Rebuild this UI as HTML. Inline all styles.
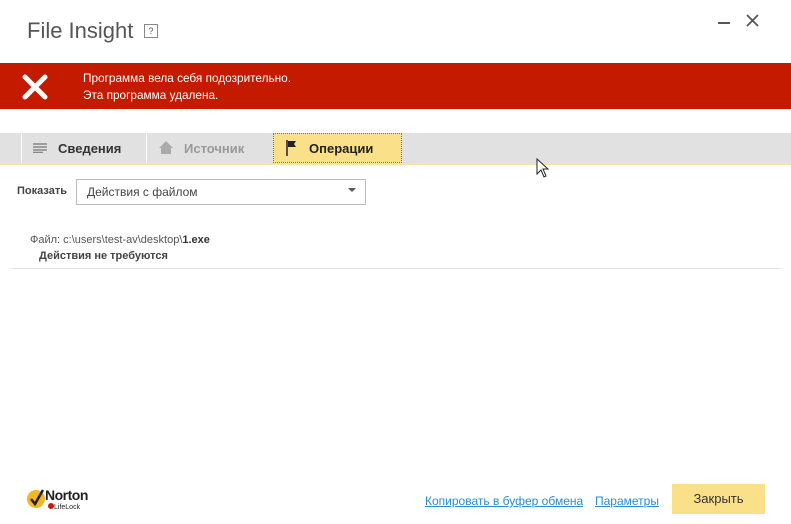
<!DOCTYPE html>
<html><head><meta charset="utf-8"><style>
body{margin:0;width:791px;height:524px;background:#fff;font-family:"Liberation Sans",sans-serif;position:relative;overflow:hidden}
.a{position:absolute}
</style></head><body>
<div class="a" style="left:27px;top:18px;font-size:22px;color:#555">File Insight</div>
<div class="a" style="left:144px;top:24px;width:12px;height:12px;border:1px solid #888;font-size:9px;color:#555;text-align:center;line-height:12px">?</div>
<div class="a" style="left:718px;top:22px;width:12px;height:2px;background:#555"></div>
<svg class="a" style="left:746px;top:14px" width="13" height="13"><path d="M1 1L12 12M12 1L1 12" stroke="#555" stroke-width="1.8"/></svg>
<div class="a" style="left:0;top:63px;width:791px;height:46px;background:#c41a00"></div>
<svg class="a" style="left:22px;top:74px" width="26" height="26"><path d="M3 3L23 23M23 3L3 23" stroke="#fff" stroke-width="5" stroke-linecap="round"/></svg>
<div class="a" style="left:83px;top:70px;font-size:11.8px;color:#fff;line-height:17px">Программа вела себя подозрительно.<br>Эта программа удалена.</div>
<div class="a" style="left:0;top:133px;width:791px;height:30px;background:#e1e1e1;border-bottom:2px solid #f6e3a6"></div>
<div class="a" style="left:21px;top:133px;width:1px;height:30px;background:#fff"></div>
<div class="a" style="left:146px;top:133px;width:1px;height:30px;background:#fff"></div>
<svg class="a" style="left:33px;top:143px" width="14" height="10"><path d="M0 1H14M0 4H14M0 7H14M0 9.5H10" stroke="#888" stroke-width="1.5"/></svg>
<div class="a" style="left:58px;top:141px;font-size:13px;font-weight:bold;color:#333">Сведения</div>
<svg class="a" style="left:158px;top:140px" width="16" height="14"><path d="M8 1L1 8H3V14H13V8H15Z" fill="#aaa"/></svg>
<div class="a" style="left:184px;top:141px;font-size:13px;font-weight:bold;color:#999">Источник</div>
<div class="a" style="left:273px;top:133px;width:127px;height:28px;background:#fbe08a;border:1px dotted #777"></div>
<svg class="a" style="left:286px;top:140px" width="12" height="16"><path d="M1 0V16" stroke="#222" stroke-width="1.5"/><path d="M2 1H10L8 4L10 7H2Z" fill="#222"/></svg>
<div class="a" style="left:309px;top:141px;font-size:13px;font-weight:bold;color:#222">Операции</div>
<svg class="a" style="left:536px;top:158px" width="14" height="20"><path d="M1 1V16L5 12L8 19L10 18L7 11H12Z" fill="#fff" stroke="#222" stroke-width="1"/></svg>
<div class="a" style="left:17px;top:185px;font-size:11px;font-weight:bold;color:#444">Показать</div>
<div class="a" style="left:76px;top:179px;width:288px;height:24px;border:1px solid #bbb"></div>
<div class="a" style="left:87px;top:185px;font-size:12px;color:#444">Действия с файлом</div>
<div class="a" style="left:348px;top:188px;width:0;height:0;border-left:4px solid transparent;border-right:4px solid transparent;border-top:4px solid #555"></div>
<div class="a" style="left:30px;top:234px;font-size:11px;color:#555">Файл: c:\users\test-av\desktop\<b style="color:#333">1.exe</b></div>
<div class="a" style="left:39px;top:250px;font-size:11px;font-weight:bold;color:#444">Действия не требуются</div>
<div class="a" style="left:11px;top:268px;width:770px;height:1px;background:#e3e3e3"></div>
<svg class="a" style="left:26px;top:487px" width="20" height="22"><circle cx="10" cy="12" r="9" fill="#f2b823"/><path d="M5 12L9 17L17 3" stroke="#222" stroke-width="2.5" fill="none"/></svg>
<div class="a" style="left:45px;top:487px;font-size:14px;font-weight:bold;color:#222;letter-spacing:-0.5px">Norton</div>
<div class="a" style="left:48px;top:503px;font-size:7px;color:#222"><span style="display:inline-block;width:6px;height:6px;background:#c41a00;border-radius:50%"></span>LifeLock</div>
<div class="a" style="left:425px;top:494px;font-size:12px;color:#2a8ad4;text-decoration:underline">Копировать в буфер обмена</div>
<div class="a" style="left:595px;top:494px;font-size:12px;color:#2a8ad4;text-decoration:underline">Параметры</div>
<div class="a" style="left:672px;top:484px;width:93px;height:30px;background:#fbe08a;font-size:13px;color:#333;text-align:center;line-height:30px">Закрыть</div>
</body></html>
